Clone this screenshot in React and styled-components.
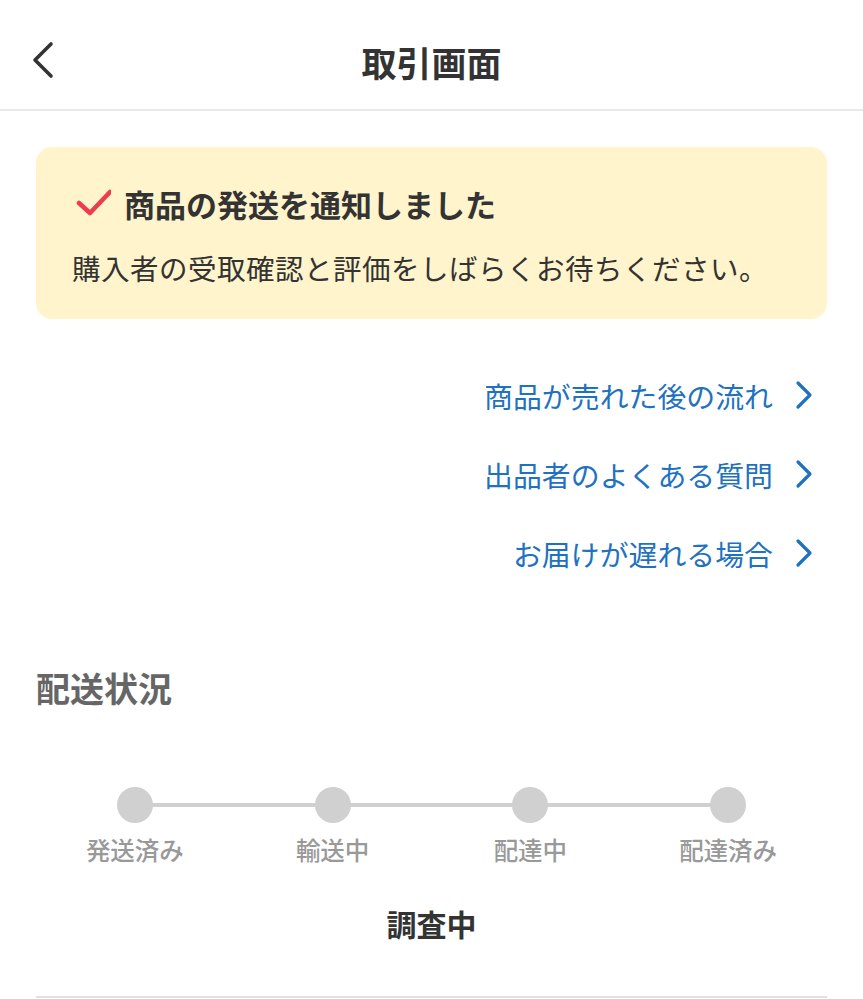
import React from 'react';
import styled, { createGlobalStyle } from 'styled-components';

const GlobalStyle = createGlobalStyle`
  body {
    margin: 0;
    background: #fff;
    font-family: 'Noto Sans CJK JP', 'Noto Sans', sans-serif;
    color: #333;
  }
`;

const links = ['商品が売れた後の流れ', '出品者のよくある質問', 'お届けが遅れる場合'];
const steps = ['発送済み', '輸送中', '配達中', '配達済み'];

const App = () => {
  return (
    <>
      <GlobalStyle />
      <Page>
        <Header>
          <BackButton aria-label="back">
            <svg width="28" height="40" viewBox="0 0 28 40">
              <polyline
                points="19,4 3,20 19,36"
                fill="none"
                stroke="#333"
                strokeWidth="3.6"
                strokeLinecap="round"
                strokeLinejoin="round"
              />
            </svg>
          </BackButton>
          <HeaderTitle>取引画面</HeaderTitle>
        </Header>

        <Content>
          <Notice>
            <NoticeTitle>
              <svg width="36" height="36" viewBox="0 0 36 36">
                <polyline
                  points="4,17 15,27 35,6"
                  fill="none"
                  stroke="#ec3d4f"
                  strokeWidth="4.6"
                  strokeLinecap="round"
                  strokeLinejoin="round"
                />
              </svg>
              商品の発送を通知しました
            </NoticeTitle>
            <NoticeText>購入者の受取確認と評価をしばらくお待ちください。</NoticeText>
          </Notice>

          <LinkList>
            {links.map((label) => (
              <LinkRow key={label}>
                {label}
                <svg width="24" height="30" viewBox="0 0 24 30">
                  <polyline
                    points="7,3 19,15 7,27"
                    fill="none"
                    stroke="#1f72c0"
                    strokeWidth="3.2"
                    strokeLinecap="round"
                    strokeLinejoin="round"
                  />
                </svg>
              </LinkRow>
            ))}
          </LinkList>

          <SectionTitle>配送状況</SectionTitle>

          <Stepper>
            {steps.map((label, i) => (
              <Step key={label} $last={i === steps.length - 1}>
                <Dot />
                <StepLabel>{label}</StepLabel>
              </Step>
            ))}
          </Stepper>

          <Status>調査中</Status>
          <Divider />
        </Content>
      </Page>
    </>
  );
};

const Page = styled.div`
  width: 863px;
  min-height: 999px;
  background: #fff;
`;

const Header = styled.header`
  position: relative;
  height: 109px;
  display: flex;
  align-items: flex-start;
  justify-content: center;
  border-bottom: 2px solid #e9e9e9;
  box-sizing: content-box;
`;

const BackButton = styled.button`
  position: absolute;
  left: 32px;
  top: 40px;
  padding: 0;
  border: none;
  background: none;
  display: flex;
`;

const HeaderTitle = styled.h1`
  margin: 40px 0 0;
  font-size: 35px;
  font-weight: 700;
  color: #333;
  line-height: 44px;
`;

const Content = styled.main`
  padding: 36px 36px 0;
`;

const Notice = styled.section`
  background: #fff4cc;
  border-radius: 16px;
  padding: 37px 36px 31px;
  height: 172px;
  box-sizing: border-box;
`;

const NoticeTitle = styled.div`
  display: flex;
  align-items: center;
  gap: 13px;
  font-size: 31px;
  font-weight: 700;
  line-height: 40px;
  color: #333;

  svg {
    margin-left: 3px;
    flex-shrink: 0;
  }
`;

const NoticeText = styled.p`
  margin: 24px 0 0;
  font-size: 28.5px;
  line-height: 40px;
  color: #333;
  letter-spacing: 0.5px;
  white-space: nowrap;
`;

const LinkList = styled.nav`
  margin-top: 36px;
  display: flex;
  flex-direction: column;
  align-items: flex-end;
`;

const LinkRow = styled.a`
  height: 79px;
  display: flex;
  align-items: center;
  gap: 18px;
  font-size: 28.9px;
  color: #1f72c0;
  text-decoration: none;
  padding-right: 12px;
`;

const SectionTitle = styled.h2`
  margin: 72px 0 0;
  font-size: 34px;
  font-weight: 700;
  line-height: 48px;
  color: #666;
`;

const Stepper = styled.div`
  margin-top: 75px;
  display: grid;
  grid-template-columns: repeat(4, 1fr);
`;

const Step = styled.div`
  position: relative;
  display: flex;
  flex-direction: column;
  align-items: center;

  &::after {
    content: '';
    display: ${(p) => (p.$last ? 'none' : 'block')};
    position: absolute;
    top: 16px;
    left: 50%;
    width: 100%;
    height: 4px;
    background: #d0d0d0;
  }
`;

const Dot = styled.span`
  position: relative;
  z-index: 1;
  width: 36px;
  height: 36px;
  border-radius: 50%;
  background: #d0d0d0;
`;

const StepLabel = styled.span`
  margin-top: 12px;
  font-size: 24.5px;
  font-weight: 500;
  line-height: 30px;
  color: #999;
`;

const Status = styled.div`
  margin-top: 38px;
  text-align: center;
  font-size: 30px;
  font-weight: 700;
  line-height: 40px;
  color: #333;
`;

const Divider = styled.hr`
  margin: 53px 0 0;
  border: none;
  border-top: 2px solid #e0e0e0;
`;

export default App;
